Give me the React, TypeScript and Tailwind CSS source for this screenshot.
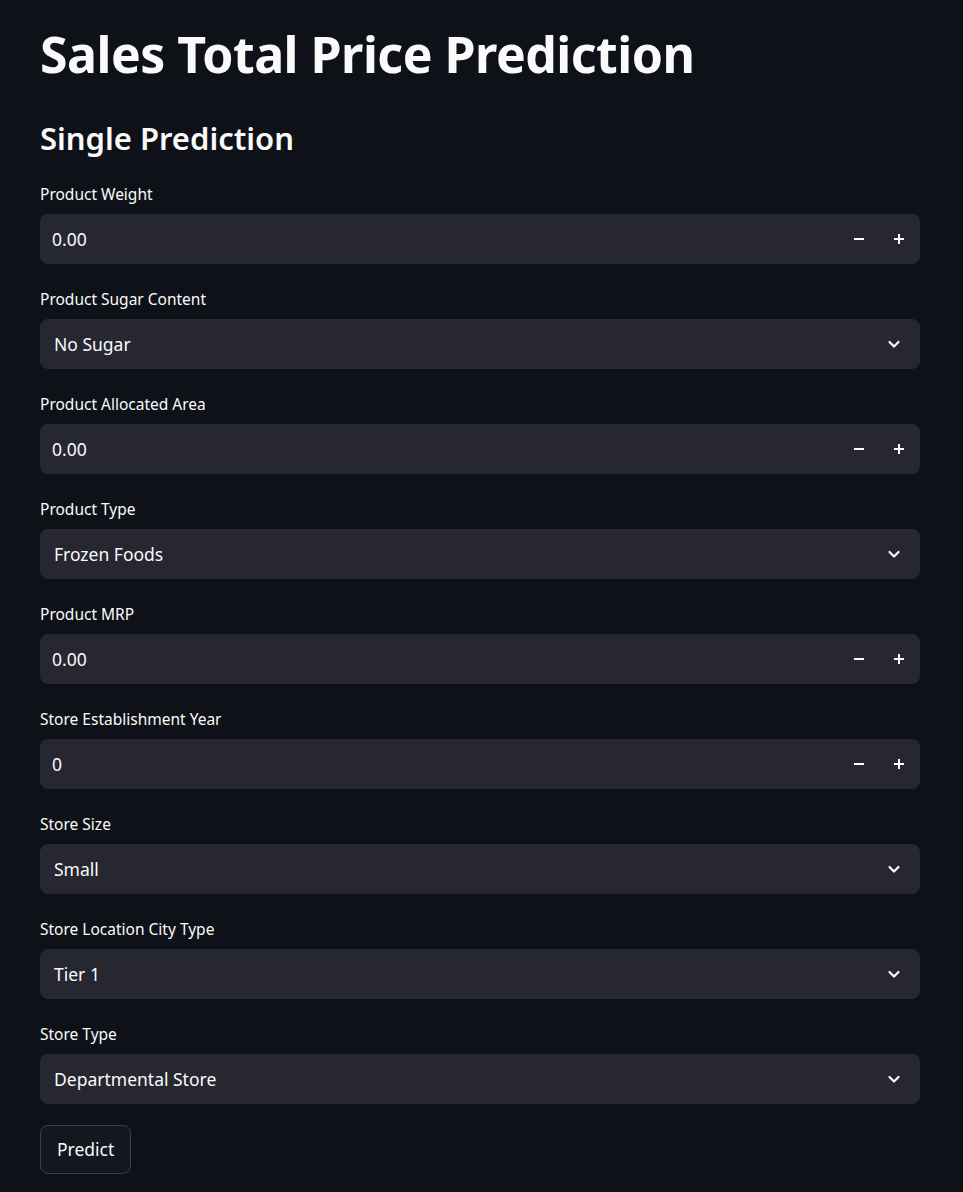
import React from 'react';

const font = { fontFamily: '"Noto Sans", "Open Sans", sans-serif' };

function Label({ text }: { text: string }) {
  return <div className="text-[15.5px] leading-5 text-[#fafafa] mb-[10px]">{text}</div>;
}

function NumberField({ label, value }: { label: string; value: string }) {
  return (
    <div>
      <Label text={label} />
      <div className="flex items-center h-[50px] rounded-lg bg-[#262730] pl-3 pr-px">
        <span className="flex-1 text-[17.5px] text-[#fafafa]">{value}</span>
        <div className="flex items-center">
          <span className="w-10 flex justify-center">
            <svg width="12" height="12" viewBox="0 0 12 12"><rect x="1" y="5" width="10" height="2" fill="#fafafa" /></svg>
          </span>
          <span className="w-10 flex justify-center">
            <svg width="12" height="12" viewBox="0 0 12 12"><rect x="1" y="5" width="10" height="2" fill="#fafafa" /><rect x="5" y="1" width="2" height="10" fill="#fafafa" /></svg>
          </span>
        </div>
      </div>
    </div>
  );
}

function SelectField({ label, value }: { label: string; value: string }) {
  return (
    <div>
      <Label text={label} />
      <div className="flex items-center h-[50px] rounded-lg bg-[#262730] pl-[14px] pr-[19px]">
        <span className="flex-1 text-[17.5px] text-[#fafafa]">{value}</span>
        <svg width="14" height="14" viewBox="0 0 14 14">
          <path d="M2.5 5l4.5 4.5L11.5 5" fill="none" stroke="#fafafa" strokeWidth="2.2" strokeLinecap="round" strokeLinejoin="round" />
        </svg>
      </div>
    </div>
  );
}

export default function App() {
  return (
    <div className="min-h-screen bg-[#0e1117] text-[#fafafa] pl-10 pr-[43px] pt-[22px] pb-6" style={font}>
      <h1 className="text-[50px] leading-[64px] font-bold tracking-[-0.5px]">Sales Total Price Prediction</h1>
      <h2 className="text-[31px] leading-[40px] font-semibold mt-[32px] mb-[26px]">Single Prediction</h2>
      <div className="flex flex-col gap-[25px]">
        <NumberField label="Product Weight" value="0.00" />
        <SelectField label="Product Sugar Content" value="No Sugar" />
        <NumberField label="Product Allocated Area" value="0.00" />
        <SelectField label="Product Type" value="Frozen Foods" />
        <NumberField label="Product MRP" value="0.00" />
        <NumberField label="Store Establishment Year" value="0" />
        <SelectField label="Store Size" value="Small" />
        <SelectField label="Store Location City Type" value="Tier 1" />
        <SelectField label="Store Type" value="Departmental Store" />
      </div>
      <button className="mt-[21px] h-[49px] px-4 rounded-lg border border-[#3d4049] bg-[#131720] text-[17.5px] text-[#fafafa]">
        Predict
      </button>
    </div>
  );
}
